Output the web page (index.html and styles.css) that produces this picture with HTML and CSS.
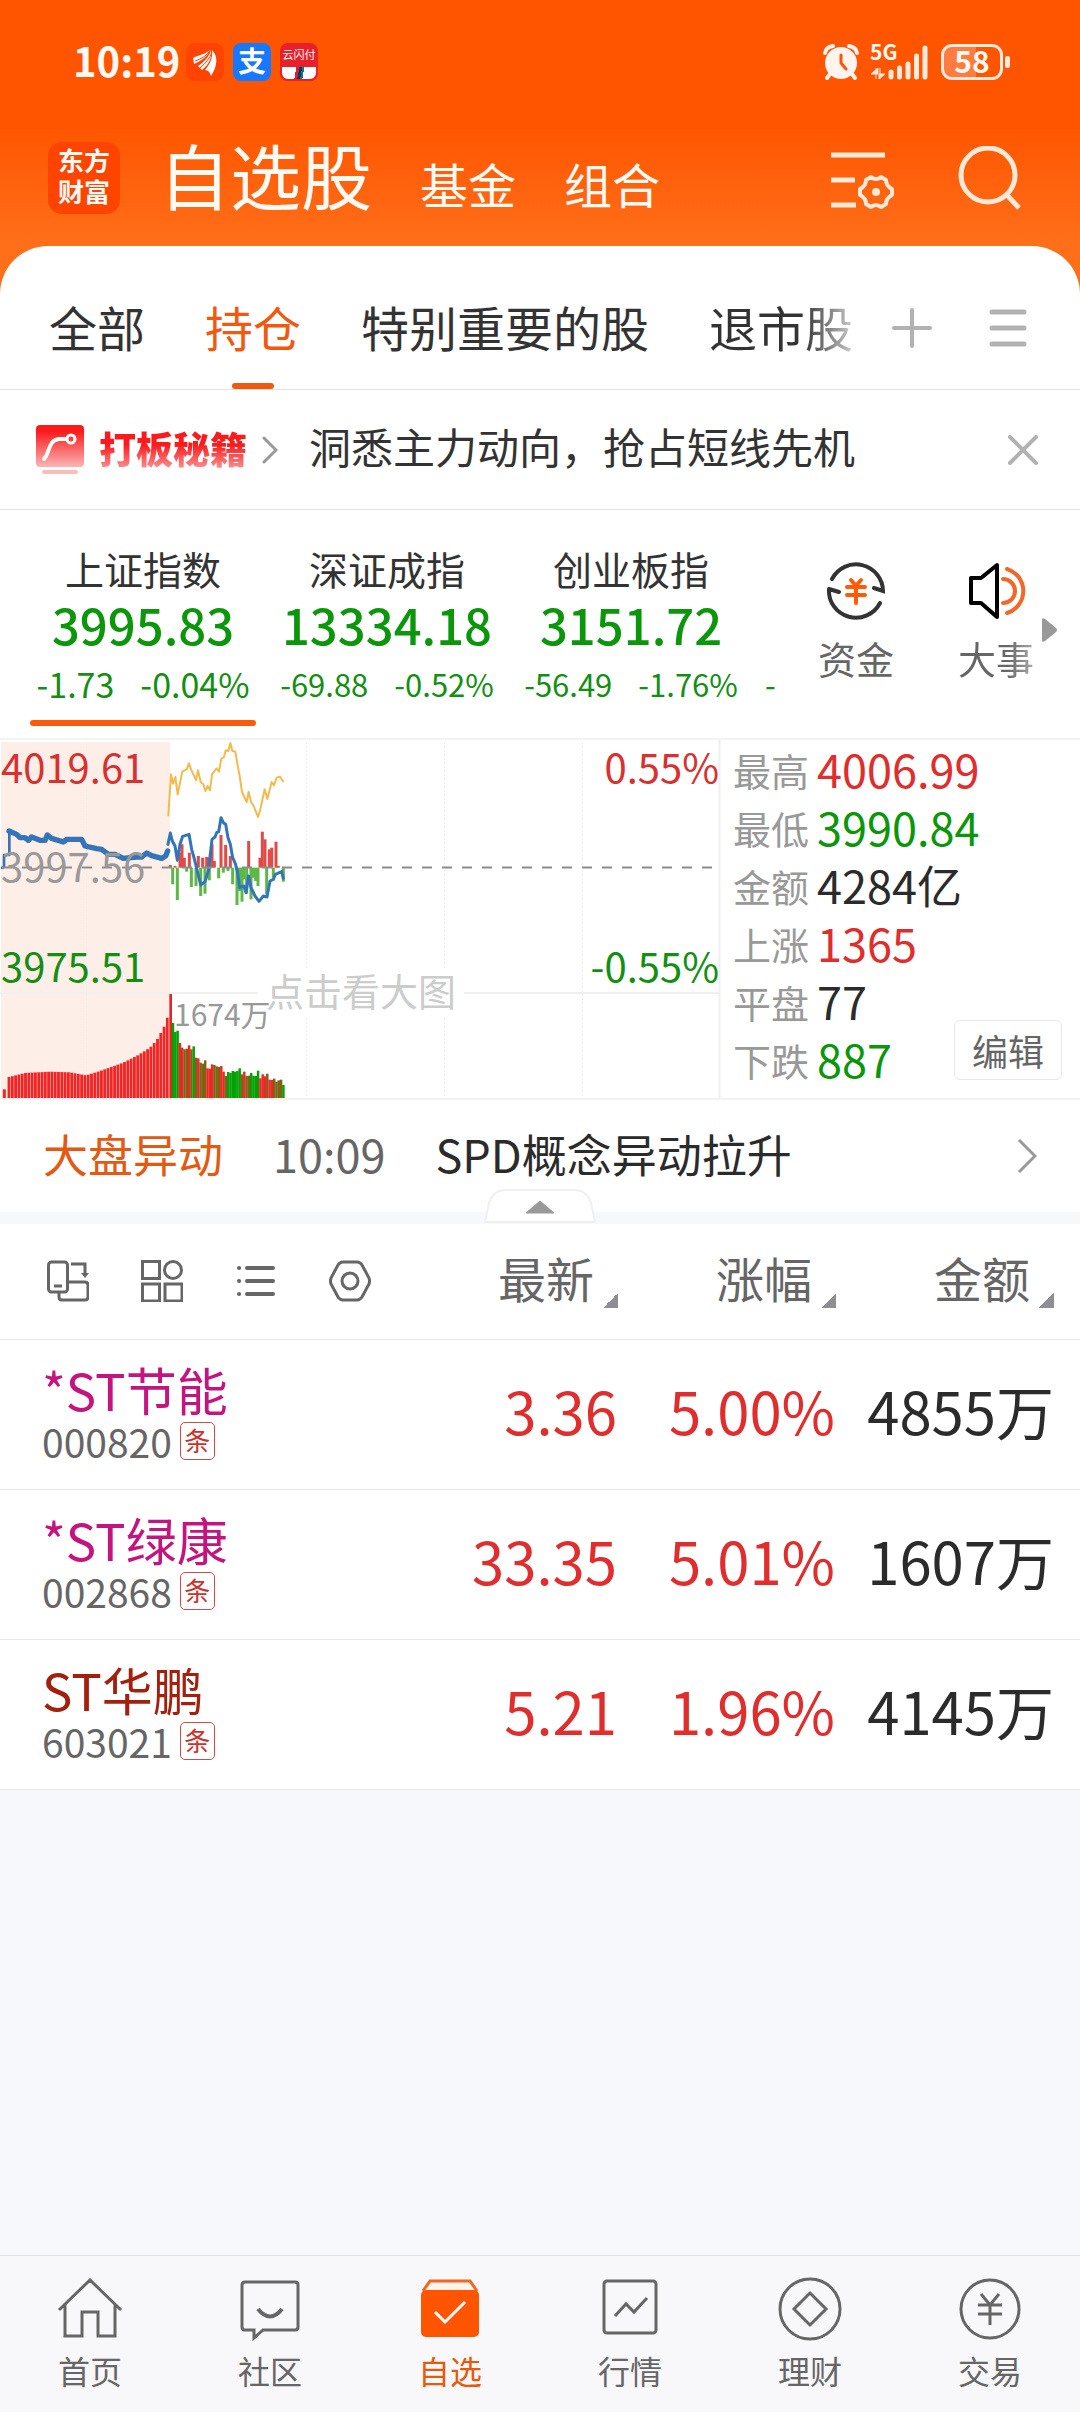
FILE: index.html
```html
<!DOCTYPE html>
<html lang="zh-CN">
<head>
  <meta charset="UTF-8">
  <meta name="viewport" content="width=device-width, initial-scale=1.0">
  <title>自选股</title>
  <link rel="stylesheet" href="styles.css">
</head>
<body>
  <header class="header">
    <div class="status-bar">
      <span class="time">10:19</span>
      <svg class="app-icon" viewBox="0 0 38 38"><rect width="38" height="38" rx="8" fill="#ff4400"/><path d="M7 15C12 12 18 12 24 7C21 14 15 18 8 21ZM12 23C19 18 23 14 25 7C26 15 23 21 16 27ZM19 27C24 21 27 15 26 7C32 13 32 22 25 33C24 29 22 27 19 27Z" fill="#fff"/><path d="M9 18C15 16 20 13 24 8M14 25C20 20 24 15 26 9" stroke="#ff4400" fill="none"/></svg>
      <span class="app-icon alipay">支</span>
      <span class="app-icon unionpay"><span>云闪付</span><i></i></span>
      <div class="status-right">
        <svg width="36" height="36" viewBox="0 0 36 36"><circle cx="18" cy="19" r="16" fill="#fff4ee"/><path d="M2 9Q3 3 10 2M34 9Q33 3 26 2M7 30L4 34M29 30L32 34" stroke="#fff4ee" stroke-width="4" stroke-linecap="round" fill="none"/><path d="M18 11V19L23 25" stroke="#ff5500" stroke-width="3" stroke-linecap="round" fill="none"/></svg>
        <span class="signal"><span class="net">5G</span><svg width="58" height="36" viewBox="0 0 58 36"><path d="M0 30H7V24ZM5 24V35M14 30H8V35ZM9 24V35" fill="#ffeadc" stroke="#ffeadc" stroke-width="1"/><path d="M20 28V33M28.500 24V33M37 20V33M45.500 12V33M54 4V33" stroke="#ffeadc" stroke-width="5" stroke-linecap="round"/></svg></span>
        <span class="battery"><b>58</b></span>
      </div>
    </div>
    <div class="title-bar">
      <a href="#" class="logo">东方<br>财富</a>
      <nav class="main-tabs">
        <a href="#" class="current">自选股</a>
        <a href="#">基金</a>
        <a href="#">组合</a>
      </nav>
      <button class="icon-button" aria-label="管理"><svg width="64" height="64" viewBox="0 0 64 64" fill="none" stroke="#ffe9d8" stroke-width="5"><path d="M1 9H55M1 34H25M1 59H26"/><path d="M41 31Q46 35 51 31L56 34Q56 40 62 43V49Q56 52 56 58L51 61Q46 57 41 61L36 58Q36 52 30 49V43Q36 40 36 34Z" stroke-width="4" stroke-linejoin="round"/><circle cx="46" cy="46" r="4" fill="#ffe9d8" stroke="none"/></svg></button>
      <button class="icon-button" aria-label="搜索"><svg width="64" height="64" viewBox="0 0 64 64" fill="none" stroke="#ffe9d8" stroke-width="5"><circle cx="30" cy="29" r="27"/><path d="M48 48L61 62"/></svg></button>
    </div>
  </header>

  <main class="sheet">
    <div class="group-bar">
      <nav class="groups">
        <a href="#">全部</a>
        <a href="#" class="active">持仓</a>
        <a href="#">特别重要的股</a>
        <a href="#" class="fading">退市股</a>
      </nav>
      <button aria-label="添加"><svg width="40" height="40" viewBox="0 0 40 40"><path d="M2 20H38M20 2V38" stroke="#b2b2b2" stroke-width="4" stroke-linecap="round"/></svg></button>
      <button aria-label="菜单"><svg width="40" height="40" viewBox="0 0 40 40"><path d="M4 4H36M4 20H36M4 36H36" stroke="#b2b2b2" stroke-width="5" stroke-linecap="round"/></svg></button>
    </div>

    <div class="promo">
      <svg width="48" height="50" viewBox="0 0 48 50"><defs><linearGradient id="promoFill" x1="0" y1="0" x2="0" y2="1"><stop offset=".15" stop-color="#fb1a1c"/><stop offset="1" stop-color="#fbb5b5"/></linearGradient></defs><rect width="48" height="42" rx="4" fill="url(#promoFill)"/><rect x="6" y="45" width="36" height="4" rx="2" fill="#fbbcbc"/><path d="M8 34C14 28 12 15 23 14H30" stroke="#fff" stroke-width="4" stroke-linecap="round" fill="none"/><circle cx="35" cy="14" r="4" stroke="#fff" stroke-width="3" fill="none"/></svg>
      <a href="#" class="promo-name">打板秘籍</a>
      <svg width="16" height="28" viewBox="0 0 16 28"><path d="M2 2L14 14L2 26" stroke="#999" stroke-width="3" stroke-linecap="round" fill="none"/></svg>
      <a href="#" class="promo-text">洞悉主力动向，抢占短线先机</a>
      <button aria-label="关闭"><svg width="30" height="30" viewBox="0 0 30 30"><path d="M2 2L28 28M28 2L2 28" stroke="#b2b2b2" stroke-width="4" stroke-linecap="round"/></svg></button>
    </div>

    <section class="indexes">
      <div class="index-list">
        <a href="#" class="index selected"><span class="index-name">上证指数</span><strong>3995.83</strong><span class="change"><span>-1.73</span><span>-0.04%</span></span></a>
        <a href="#" class="index"><span class="index-name">深证成指</span><strong>13334.18</strong><span class="change"><span>-69.88</span><span>-0.52%</span></span></a>
        <a href="#" class="index"><span class="index-name">创业板指</span><strong>3151.72</strong><span class="change"><span>-56.49</span><span>-1.76%</span></span></a>
        <span class="index-next">-</span>
      </div>
      <div class="shortcuts">
        <a href="#"><svg width="60" height="60" viewBox="0 0 60 60" fill="none" stroke="#333" stroke-width="4" stroke-linecap="round"><path d="M6 19A27 27 0 0 1 57 31L48 28M3 29L13 32M3 29A27 27 0 0 0 54 43"/><path d="M25 20L30 26L35 20M21 27H39M21 35H39M30 27V43" stroke="#ff5a0a"/></svg>资金</a>
        <a href="#"><svg width="60" height="60" viewBox="0 0 60 60" fill="none" stroke-width="4" stroke-linecap="round" stroke-linejoin="round"><path d="M5 18H15L31 5V57L15 43H5Z" stroke="#000"/><path d="M37 19A12 12 0 0 1 37 43M41 9A23 23 0 0 1 41 53" stroke="#ee6a2a"/></svg><span class="fade-end">大事</span></a>
        <svg class="more" width="16" height="26" viewBox="0 0 16 26"><path d="M1 3Q1 0 4 2L15 11Q17 13 15 15L4 24Q1 26 1 23Z" fill="#999"/></svg>
      </div>
    </section>

    <section class="market">
      <svg class="chart" viewBox="0 0 720 358">
        <rect x="1" y="2" width="169" height="356" fill="#feeee8"/>
        <path d="M86.500 2V358M306.500 2V358M444.500 2V358M582.500 2V358" class="grid-dots"/>
        <path d="M0 253H720M719.500 0V358" class="grid-line"/>
        <rect x="258" y="230" width="206" height="48" fill="#fff"/>
        <text x="361" y="266" text-anchor="middle" class="hint">点击看大图</text>
        <svg class="plot" viewBox="0 27 2160 1074" width="720" height="358"></svg>
        <path d="M2 127.500H712" class="prev-close"/>
        <text x="1" y="43" class="up">4019.61</text>
        <text x="1" y="142" class="flat">3997.56</text>
        <text x="1" y="242" class="down">3975.51</text>
        <text x="719" y="43" text-anchor="end" class="up">0.55%</text>
        <text x="719" y="242" text-anchor="end" class="down">-0.55%</text>
        <text x="174" y="286" class="volume">1674万</text>
      </svg>
      <div class="stats">
        <dl>
          <div><dt>最高</dt><dd class="up">4006.99</dd></div>
          <div><dt>最低</dt><dd class="down">3990.84</dd></div>
          <div><dt>金额</dt><dd>4284亿</dd></div>
          <div><dt>上涨</dt><dd class="up">1365</dd></div>
          <div><dt>平盘</dt><dd>77</dd></div>
          <div><dt>下跌</dt><dd class="down">887</dd></div>
        </dl>
        <button class="edit">编辑</button>
      </div>
    </section>

    <a href="#" class="news">
      <span class="news-tag">大盘异动</span>
      <span class="news-time">10:09</span>
      <span class="news-title">SPD概念异动拉升</span>
      <svg width="20" height="36" viewBox="0 0 20 36"><path d="M2 2L18 18L2 34" stroke="#999" stroke-width="3" fill="none"/></svg>
    </a>
    <div class="divider">
      <button class="collapse" aria-label="收起"><svg width="112" height="34" viewBox="0 0 112 34"><path d="M1 33L5 14Q9 1 22 1H90Q103 1 107 14L111 33Z" fill="#fff" stroke="#f0f0f2" stroke-width="2"/><path d="M42 24L56 12L70 24Z" fill="#999" stroke="#999" stroke-linejoin="round"/></svg></button>
    </div>

    <table class="stocks">
      <thead>
        <tr>
          <th>
            <div class="tools">
              <button aria-label="切换"><svg viewBox="0 0 42 42"><rect x="1.500" y="2" width="19" height="30" rx="3"/><path d="M7 26H15M24 4H38V14M12 33V37Q12 40 15 40H38Q41 40 41 37V25Q41 22 38 22H21"/><path d="M34 13H42L38 18Z" fill="#666" stroke="none"/></svg></button>
              <button aria-label="宫格"><svg viewBox="0 0 42 42"><rect x="1.500" y="1.500" width="17" height="17"/><rect x="1.500" y="24" width="17" height="17"/><rect x="24" y="24" width="17" height="17"/><circle cx="32" cy="10" r="8.500"/></svg></button>
              <button aria-label="列表"><svg viewBox="0 0 42 42"><path d="M12 8H38M12 21H38M12 34H38M4 8H4.100M4 21H4.100M4 34H4.100" stroke-width="4" stroke-linecap="round"/></svg></button>
              <button aria-label="设置"><svg viewBox="0 0 42 42"><path d="M14 2H28Q31 2 33 5L40 18Q41 21 40 24L33 37Q31 40 28 40H14Q11 40 9 37L2 24Q1 21 2 18L9 5Q11 2 14 2Z"/><circle cx="21" cy="21" r="8"/></svg></button>
            </div>
          </th>
          <th><button class="sort">最新</button></th>
          <th><button class="sort">涨幅</button></th>
          <th><button class="sort">金额</button></th>
        </tr>
      </thead>
      <tbody>
        <tr>
          <td><div class="stock-name">*ST节能</div><div class="code">000820<span>条</span></div></td>
          <td class="up">3.36</td><td class="up">5.00%</td><td>4855万</td>
        </tr>
        <tr>
          <td><div class="stock-name">*ST绿康</div><div class="code">002868<span>条</span></div></td>
          <td class="up">33.35</td><td class="up">5.01%</td><td>1607万</td>
        </tr>
        <tr>
          <td><div class="stock-name dark">ST华鹏</div><div class="code">603021<span>条</span></div></td>
          <td class="up">5.21</td><td class="up">1.96%</td><td>4145万</td>
        </tr>
      </tbody>
    </table>
  </main>

  <nav class="tab-bar">
    <a href="#"><svg viewBox="0 0 66 66"><path d="M2 34L33 4L64 34M8 29V60H25V36H41V60H58V29"/></svg>首页</a>
    <a href="#"><svg viewBox="0 0 66 66"><path d="M8 6H58Q61 6 61 9V51Q61 54 58 54H26L17 62V54H8Q5 54 5 51V9Q5 6 8 6Z"/><path d="M21 33Q33 48 45 33" stroke-width="4"/></svg>社区</a>
    <a href="#" class="active"><svg viewBox="0 0 66 66"><path d="M6 15L13 5H53L60 15" fill="#fff3ec" stroke="#f26522"/><rect x="4" y="14" width="58" height="47" rx="5" fill="#ff5500" stroke="none"/><path d="M18 36L28 46L48 26" stroke="#fff"/></svg>自选</a>
    <a href="#"><svg viewBox="0 0 66 66"><rect x="7" y="5" width="52" height="52" rx="3"/><path d="M18 40L29 28L37 36L50 22"/></svg>行情</a>
    <a href="#"><svg viewBox="0 0 66 66"><circle cx="33" cy="33" r="30"/><path d="M33 17L49 33L33 49L17 33Z"/></svg>理财</a>
    <a href="#"><svg viewBox="0 0 66 66"><circle cx="33" cy="33" r="29"/><path d="M24 18L33 29L42 18M21 29H45M21 38H45M33 29V49"/></svg>交易</a>
  </nav>

  <script src="chart.js"></script>
</body>
</html>
```
FILE: styles.css
```css
* {
  box-sizing: border-box;
}

body {
  margin: 0;
  min-height: 100vh;
  display: flex;
  flex-direction: column;
  background: #f6f8fb;
  color: #2b2b2b;
  font-family: 'Noto Sans CJK SC', sans-serif;
}

a {
  color: inherit;
  text-decoration: none;
}

button {
  padding: 0;
  border: none;
  background: none;
  color: inherit;
  font: inherit;
  cursor: pointer;
}

svg {
  display: block;
  flex: none;
}

.up {
  color: #e02d2d;
  fill: #d93030;
}

.down {
  color: #0c960c;
  fill: #148f14;
}

.flat {
  fill: #999;
}

/* header */
.header {
  height: 294px;
  margin-bottom: -48px;
  background: linear-gradient(#ff5500 125px, #ff6f1a 246px);
  color: #fff9f3;
}

.status-bar {
  display: flex;
  align-items: center;
  height: 124px;
  padding: 0 70px 0 73px;
}

.time {
  width: 113px;
  padding-bottom: 4px;
  font-size: 40px;
  line-height: 48px;
  font-weight: 700;
}

.app-icon {
  width: 38px;
  height: 38px;
  margin-right: 9px;
  border-radius: 8px;
  text-align: center;
}

.alipay {
  background: #1678ff;
  font-size: 28px;
  line-height: 34px;
  font-weight: 700;
}

.unionpay {
  display: flex;
  flex-direction: column;
  justify-content: space-between;
  background: #e8202c;
  font-size: 11px;
  line-height: 22px;
}

.unionpay i {
  height: 14px;
  border: 2px solid #e8202c;
  border-top: none;
  border-radius: 0 0 8px 8px;
  background: linear-gradient(100deg, #fff 40%, #d8203a 40% 48%, #12365e 48% 56%, #0a7c7c 56% 62%, #fff 62%);
}

.status-right {
  display: flex;
  align-items: center;
  gap: 12px;
  margin-left: auto;
}

.signal {
  position: relative;
}

.net {
  position: absolute;
  left: -1px;
  top: -4px;
  font-size: 21px;
  line-height: 22px;
  font-weight: 700;
}

.battery {
  position: relative;
  width: 62px;
  height: 36px;
  margin-right: 7px;
  border: 3px solid #ffeadc;
  border-radius: 11px;
  background: linear-gradient(90deg, #ff7c40 58%, transparent 58%);
  font-size: 30px;
  line-height: 26px;
  text-align: center;
}

.battery b {
  font-weight: 700;
}

.battery::after {
  content: '';
  position: absolute;
  right: -10px;
  top: 9px;
  width: 5px;
  height: 12px;
  border-radius: 2px;
  background: #ffeadc;
}

.title-bar {
  display: flex;
  align-items: center;
  height: 108px;
  padding: 0 58px 0 48px;
}

.logo {
  width: 72px;
  height: 72px;
  padding-top: 2px;
  border-radius: 14px;
  background: #ff4400;
  font-size: 26px;
  line-height: 31px;
  font-weight: 700;
  text-align: center;
}

.main-tabs {
  display: flex;
  align-items: baseline;
  flex: 1;
  gap: 48px;
  margin-left: 39px;
  font-size: 48px;
  line-height: 84px;
}

.main-tabs .current {
  font-size: 71px;
}

.icon-button {
  margin-left: 64px;
}

/* group tabs */
.sheet {
  flex: 1;
}

.group-bar {
  display: flex;
  align-items: center;
  height: 144px;
  padding: 20px 52px 0 49px;
  border-bottom: 1px solid #e3e3e3;
  border-radius: 48px 48px 0 0;
  background: #fff;
}

.groups {
  display: flex;
  flex: 1;
  gap: 60px;
  font-size: 48px;
  line-height: 120px;
  padding-bottom: 3px;
  color: #333;
  white-space: nowrap;
}

.groups .active {
  position: relative;
  color: #f0590f;
}

.groups .active::after {
  content: '';
  position: absolute;
  left: 50%;
  bottom: -3px;
  width: 42px;
  height: 6px;
  margin-left: -21px;
  border-radius: 3px;
  background: #f0590f;
}

.fading {
  background: linear-gradient(90deg, #333 65%, #ccc);
  -webkit-background-clip: text;
  background-clip: text;
  color: transparent;
}

.group-bar button {
  margin-left: 56px;
}

.group-bar button:first-of-type {
  margin-left: 0;
}

/* promo */
.promo {
  display: flex;
  align-items: center;
  height: 120px;
  padding: 0 42px 0 36px;
  border-bottom: 1px solid #e3e3e3;
  background: #fff;
}

.promo-name {
  margin: 0 15px;
  padding-bottom: 4px;
  font-size: 37px;
  line-height: 48px;
  font-weight: 900;
  background: linear-gradient(#fb1a1c 40%, #fbb5b5);
  -webkit-background-clip: text;
  background-clip: text;
  color: transparent;
}

.promo-text {
  flex: 1;
  margin-left: 31px;
  padding-bottom: 8px;
  font-size: 42px;
  line-height: 60px;
  color: #333;
}

/* indexes */
.indexes {
  display: flex;
  height: 230px;
  border-bottom: 2px solid #f3f3f3;
  background: #fff;
}

.index-list {
  display: flex;
  flex: 1;
  min-width: 0;
  padding-left: 21px;
  overflow: hidden;
}

.index {
  position: relative;
  flex: none;
  display: flex;
  flex-direction: column;
  align-items: center;
  width: 244px;
  padding-top: 34px;
  color: #0c960c;
}

.index-name {
  font-size: 39px;
  line-height: 48px;
  color: #333;
}

.index strong {
  font-size: 49px;
  line-height: 64px;
  font-weight: 500;
}

.change {
  display: flex;
  gap: 26px;
  font-size: 31px;
  line-height: 56px;
  color: #148f14;
}

.selected .change {
  font-size: 34px;
}

.selected::after {
  content: '';
  position: absolute;
  left: 9px;
  right: 9px;
  bottom: 12px;
  height: 6px;
  border-radius: 3px;
  background: #fa5a0a;
}

.index-next {
  padding: 146px 0 0 12px;
  font-size: 31px;
  line-height: 56px;
  color: #148f14;
}

.shortcuts {
  position: relative;
  display: flex;
  gap: 64px;
  width: 302px;
  padding: 50px 0 0 40px;
  font-size: 38px;
  line-height: 48px;
  color: #666;
}

.shortcuts a {
  display: flex;
  flex-direction: column;
  align-items: center;
  gap: 14px;
}

.fade-end {
  background: linear-gradient(90deg, #666 65%, #aaa);
  -webkit-background-clip: text;
  background-clip: text;
  color: transparent;
}

.more {
  position: absolute;
  right: 23px;
  top: 107px;
}

/* market overview */
.market {
  display: grid;
  grid-template-columns: 2fr 1fr;
  border-bottom: 2px solid #f3f3f3;
  background: #fff;
}

.chart {
  width: 100%;
  font-size: 40px;
  overflow: visible;
}

.grid-dots {
  stroke: #eee;
  stroke-dasharray: 2 2;
}

.grid-line {
  stroke: #f0f0f0;
  stroke-width: 2;
}

.prev-close {
  stroke: #8c8c8c;
  stroke-width: 2;
  stroke-dasharray: 10 10;
}

.hint {
  font-size: 38px;
  fill: #ccc;
}

.volume {
  font-size: 30px;
  fill: #999;
}

.stats {
  position: relative;
  padding-left: 13px;
}

.stats dl {
  margin: 0;
}

.stats dl div {
  display: flex;
  align-items: center;
  gap: 8px;
  height: 58px;
}

.stats dt {
  font-size: 38px;
  color: #999;
}

.stats dd {
  margin: 0;
  font-size: 45px;
  line-height: 58px;
}

.edit {
  position: absolute;
  right: 18px;
  bottom: 18px;
  width: 108px;
  height: 60px;
  border: 1px solid #e8e8e8;
  border-radius: 6px;
  background: #fff;
  font-size: 36px;
  line-height: 54px;
  color: #666;
}

/* news */
.news {
  display: flex;
  align-items: center;
  height: 112px;
  padding: 0 43px 0 43px;
  background: #fff;
  font-size: 45px;
  line-height: 60px;
}

.news span {
  padding-bottom: 4px;
}

.news-tag {
  color: #e35a12;
}

.news-time {
  margin: 0 50px;
  color: #666;
}

.news-title {
  flex: 1;
}

.divider {
  position: relative;
  height: 12px;
}

.collapse {
  position: absolute;
  left: 50%;
  bottom: 1px;
  transform: translateX(-50%);
}

/* stock table */
.stocks {
  width: 100%;
  border-collapse: collapse;
  table-layout: fixed;
  background: #fff;
}

.stocks tr {
  border-bottom: 1px solid #e8e8e8;
}

.stocks th {
  height: 115px;
  padding: 0;
  width: 218px;
  text-align: right;
  font-weight: 400;
}

.stocks th:first-child {
  width: auto;
}

.stocks th:last-child {
  width: 244px;
}

.stocks th:last-child,
.stocks td:last-child {
  padding-right: 26px;
}

.tools {
  display: flex;
  gap: 52px;
  padding-left: 47px;
}

.tools svg {
  width: 42px;
  height: 42px;
  fill: none;
  stroke: #666;
  stroke-width: 3;
}

.sort {
  padding-bottom: 8px;
  font-size: 48px;
  line-height: 60px;
  color: #666;
}

.sort::after {
  content: '';
  display: inline-block;
  width: 15px;
  height: 15px;
  margin-left: 9px;
  vertical-align: -10px;
  background: linear-gradient(135deg, transparent 50%, #8e8e93 50%);
}

.stocks td {
  height: 150px;
  padding: 0 1px 8px 0;
  font-size: 58px;
  line-height: 72px;
  text-align: right;
  white-space: nowrap;
}

.stocks td:first-child {
  padding: 0 0 6px 42px;
  text-align: left;
}

.stock-name {
  font-size: 51px;
  line-height: 60px;
  color: #c4147e;
}

.stock-name.dark {
  color: #a3200f;
}

.code {
  display: flex;
  align-items: center;
  gap: 8px;
  font-size: 39px;
  line-height: 44px;
  color: #666;
}

.code span {
  width: 35px;
  height: 38px;
  border: 1px solid #cc4d48;
  border-radius: 5px;
  font-size: 26px;
  line-height: 34px;
  text-align: center;
  color: #c8342e;
}

/* bottom tabs */
.tab-bar {
  display: flex;
  height: 157px;
  border-top: 1px solid #dfe2e5;
  background: #f8f8fb;
}

.tab-bar a {
  flex: 1;
  display: flex;
  flex-direction: column;
  align-items: center;
  gap: 8px;
  padding-top: 20px;
  font-size: 32px;
  line-height: 40px;
  color: #666;
}

.tab-bar svg {
  width: 66px;
  height: 66px;
  fill: none;
  stroke: #666;
  stroke-width: 3;
}

.tab-bar .active {
  color: #e8590c;
}
```
FILE: chart.js
```js
const plot = document.querySelector('.plot');
const ZERO = 410;
const BASE = 1101;

function add(tag, attrs) {
  const el = document.createElementNS('http://www.w3.org/2000/svg', tag);
  for (const key in attrs) el.setAttribute(key, attrs[key]);
  plot.appendChild(el);
}

function bar(x, top, bottom, color, width) {
  add('rect', { x: x - width / 2, y: top, width, height: bottom - top, fill: color });
}

function line(points, color, width) {
  add('polyline', { points, fill: 'none', stroke: color, 'stroke-width': width, 'stroke-linejoin': 'round', 'stroke-linecap': 'round' });
}

// money flow in and out around the previous close
const inflow = [[511,402],[525,405],[540,365],[546,340],[553,380],[568,365],[595,375],[608,380],[620,378],[628,380],[636,340],[643,390],[663,312],[677,342],[691,375],[746,330],[780,380],[787,302],[795,325],[808,355],[815,350],[828,332],[835,405]];
const outflow = [[518,460],[532,507],[560,422],[574,468],[588,465],[602,495],[615,488],[628,448],[656,442],[670,425],[684,420],[698,460],[711,522],[719,480],[726,512],[732,445],[740,488],[753,505],[760,440],[767,450],[774,465],[800,490],[820,440],[850,452]];
inflow.forEach(([x, y]) => bar(x, y, ZERO, '#e04b48', 9));
outflow.forEach(([x, y]) => bar(x, ZERO, y, '#5cb847', 9));

// call auction volume
const auction = [[27,1038],[75,1026],[150,1022],[210,1024],[258,1033],[300,1020],[370,995],[415,972],[450,950],[470,928],[483,905],[492,888],[502,860]];
bar(13, 1075, BASE, '#f02626', 9);
for (let i = 0; i < 49; i++) {
  const x = 27 + i * 9.9;
  const n = auction.findIndex((p) => p[0] >= x);
  if (n < 0) break;
  const b = auction[n];
  const a = auction[Math.max(n - 1, 0)];
  const t = b[0] === a[0] ? 0 : (x - a[0]) / (b[0] - a[0]);
  bar(x, a[1] + (b[1] - a[1]) * t, BASE, '#f02626', 8.6);
}
bar(502, 860, BASE, '#f02626', 8);
bar(512, 789, BASE, '#e02626', 8);

// minute volume, r = up, g = down, m = mixed
const colors = { r: '#f02626', g: '#04a004', m: '#7c6414' };
const tops = [876,903,899,936,950,955,953,943,955,946,980,982,995,998,988,1012,1013,1000,1002,1006,1008,1005,1022,1035,1023,1026,1020,1022,1020,1012,1030,1022,1035,1034,1026,1034,1035,1019,1042,1030,1036,1028,1046,1047,1043,1052,1048,1046,1062];
const kinds = 'gggrrmmrmgmrmmmrrrmmmrrmggggggmrmmggggrrrmrrmmmmg';
tops.forEach((y, i) => bar(519 + i * 6.9, y, BASE, colors[kinds[i]], 7.4));

line('505,253 513,130 519,158 526,138 533,190 547,122 560,115 567,97 573,115 588,147 594,118 602,153 610,160 616,180 623,165 630,178 636,130 645,118 650,112 657,122 664,83 672,78 677,58 685,60 691,36 697,60 706,62 712,98 719,135 726,183 740,213 746,183 753,212 761,225 774,258 781,235 794,175 802,204 815,153 822,163 830,140 840,137 849,151', '#f3bb4d', 6);
line('504,340 511,306 517,330 525,345 532,388 540,340 548,316 567,310 575,355 582,380 592,420 602,462 615,452 625,420 636,325 645,318 650,305 656,302 663,260 670,275 677,280 684,320 691,340 698,380 706,398 712,420 719,470 732,465 738,485 746,435 753,470 765,495 777,511 790,495 801,498 810,450 820,445 826,430 845,422 850,442', '#3474b8', 9);
line('6,410 12,408 12,372 28,372 28,304', '#3474b8', 8);
line('27,300 50,310 60,320 75,320 85,328 95,318 120,328 135,328 142,312 155,322 190,333 200,325 245,325 255,345 290,353 305,355 325,370 345,370 370,382 410,378 425,378 440,366 455,374 485,382 497,375 503,360', '#3474b8', 16);
```
